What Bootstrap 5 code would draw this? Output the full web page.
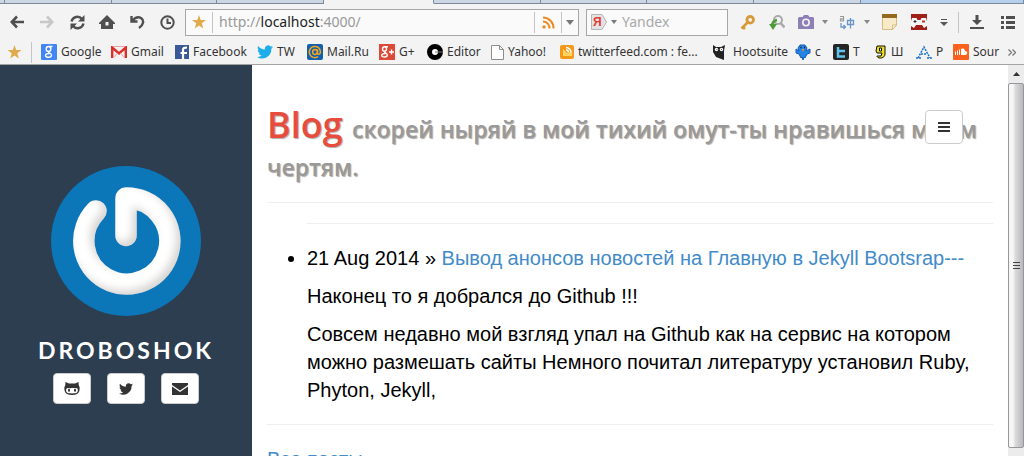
<!DOCTYPE html>
<html lang="ru">
<head>
<meta charset="utf-8">
<meta name="viewport" content="width=device-width, initial-scale=1">
<title>Blog</title>
<link rel="stylesheet" href="https://cdn.jsdelivr.net/npm/bootstrap@5.3.0/dist/css/bootstrap.min.css">
<style>
  body { font-family: "Liberation Sans", Arial, sans-serif; font-size: 20px; line-height: 28px; color: #000; background: #fff; }
  svg { display: block; flex: none; }

  /* browser chrome */
  .chrome { background: #f3f3f3; border-bottom: 1px solid #a3a3a3; font-family: "Noto Sans", sans-serif; font-size: 12px; line-height: 16px; color: #333; }
  .chrome a { color: #333; }
  .tabstrip { height: 4px; }
  .tab { background: #cbd7e4; border-bottom: 1px solid #80899a; border-right: 1px solid #80899a; }
  .tab-active { background: #f3f3f3; border-bottom-color: #f3f3f3; }
  .tab-rest { background: #b4d0ec; }
  .toolbar { height: 36px; padding-left: 2px; color: #4f4f4f; }
  .tool { width: 30px; height: 26px; border: 0; padding: 0; background: none; color: inherit; display: flex; align-items: center; justify-content: center; flex: none; }
  .tool-off { color: #c8c8c8; }
  .field { height: 27px; border: 1px solid #a6a6a6; background: #fafafa; }
  .url-box { margin-left: 3px; }
  .url-star { margin: 0 6px; }
  .field input { border: 0; background: none; outline: 0; padding: 0; width: 100%; min-width: 0; font-size: 14px; color: #8a8a8a; }
  .field input::placeholder { color: #a9a9a9; opacity: 1; }
  .address { font-size: 14px; position: relative; margin-left: 6px; }
  .address-text { position: absolute; left: 0; pointer-events: none; white-space: nowrap; color: #999; }
  .address-text b { font-weight: 400; color: #222; }
  .address input { color: transparent; }
  .vline { width: 1px; height: 21px; background: #c4c4c4; flex: none; }
  .search-box { width: 142px; margin-left: 7px; margin-right: 4px; }
  .search-box input { margin-left: 5px; }
  .bookmarks { height: 24px; padding: 0 8px 0 7px; }
  .bookmarks a { display: flex; align-items: center; gap: 4px; text-decoration: none; white-space: nowrap; flex: none; }

  /* page */
  .page-row { height: calc(100vh - 65px); }
  .side { background: #2c3e50; width: 25%; padding-top: 101px; }
  .site-name { font-family: Lato, sans-serif; font-size: 23px; line-height: 28px; font-weight: 700; letter-spacing: 3px; color: #fff; margin: 20px 0 9px; }
  .social { width: 38px; height: 31px; padding: 0; border: 1px solid #ccc; border-radius: 4px; background: #fff; color: #333; display: flex; align-items: center; justify-content: center; }
  .main-col { padding: 41px 15px 0; overflow: hidden; min-width: 0; position: relative; }
  .blog-title { font-family: "Open Sans", "Noto Sans", sans-serif; font-size: 36px; line-height: 38px; font-weight: 600; color: #e74c3c; text-shadow: 1px 1px 1px #aaa; margin: 0; }
  .blog-title small { font-size: 23px; line-height: 22px; font-weight: 600; color: #999; }
  .rule { border: 0; border-top: 1px solid #eee; opacity: 1; margin: 20px 0; }
  .posts { padding-left: 40px; margin: 0; }
  .posts p { margin: 10px 0 0; }
  .link { color: #428bca; text-decoration: none; }
  .menu-btn { position: absolute; right: 45px; top: 45px; width: 38px; height: 34px; padding: 0; border: 1px solid #ccc; border-radius: 4px; background: #fff; display: flex; align-items: center; justify-content: center; }
  .scroll-track { width: 16px; background: #ececec; flex: none; }
  .scroll-up { height: 18px; }
  .scroll-thumb { border: 1px solid #97979b; border-radius: 2px; background: linear-gradient(90deg, #f6f6f6 0 30%, #dadadc 45%, #b9b9bd); margin-bottom: 8px; }
</style>
</head>
<body class="vh-100 overflow-hidden">
<header class="chrome">
  <div class="tabstrip d-flex">
    <div class="tab" style="width:.5%"></div><div class="tab" style="width:10.4%"></div><div class="tab" style="width:10.3%"></div><div class="tab" style="width:10.4%"></div>
    <div class="tab tab-active" style="width:10.8%"></div>
    <div class="tab" style="width:10.4%"></div><div class="tab" style="width:10.4%"></div><div class="tab" style="width:10.4%"></div><div class="tab" style="width:10.5%"></div>
    <div class="tab tab-rest flex-grow-1"></div>
  </div>
  <div class="toolbar d-flex align-items-center">
    <button class="tool" aria-label="Back"><svg width="14" height="14" viewBox="0 0 14 14" fill="none" stroke="currentColor" stroke-width="2.6"><path d="M7 1.5 1.8 7 7 12.500M2 7h12"/></svg></button>
    <button class="tool tool-off" aria-label="Forward"><svg width="14" height="14" viewBox="0 0 14 14" fill="none" stroke="currentColor" stroke-width="2.600"><path d="M7 1.500 12.200 7 7 12.500M12 7H0"/></svg></button>
    <button class="tool" aria-label="Reload"><svg width="15" height="15" viewBox="0 0 15 15" fill="none" stroke="currentColor" stroke-width="2.400"><path d="M1.500 6.500a6 6 0 0 1 10.500-2.500M13.500 8.500A6 6 0 0 1 3 11"/><path d="M14.500 0v6.500H8zM.5 15V8.500H7z" fill="currentColor" stroke="none"/></svg></button>
    <button class="tool" aria-label="Home"><svg width="16" height="14" viewBox="0 0 16 14" fill="currentColor"><path fill-rule="evenodd" d="M8 0 0 8v1h2v5h12V9h2V8zM6.500 7h3v3.500h-3z"/></svg></button>
    <button class="tool" aria-label="Undo"><svg width="15" height="14" viewBox="0 0 15 14" fill="none" stroke="currentColor" stroke-width="2.400"><path d="M1.500 1v5.500H7.500M2 6.200C5 2.500 8 1.500 11 3c3.500 2.500 2.500 7-2 10"/></svg></button>
    <button class="tool" aria-label="History"><svg width="15" height="15" viewBox="0 0 15 15" fill="none" stroke="currentColor" stroke-width="2"><circle cx="7.500" cy="7.500" r="6.200"/><path d="M7.500 3.500v4.500h3.500"/></svg></button>
    <div class="field url-box d-flex align-items-center flex-grow-1">
      <svg class="url-star" width="14" height="14" viewBox="0 0 14 14" fill="#e0ab4c"><path d="m7 0 1.700 5H14L9.800 8.200l1.500 5.300L7 10.400l-4.300 3.100 1.500-5.300L0 5h5.300z"/></svg>
      <span class="vline"></span>
      <label class="address d-flex align-items-center flex-grow-1"><span class="address-text">http://<b>localhost</b>:4000/</span><input type="text" aria-label="Address"></label>
      <span class="vline"></span>
      <button class="tool" style="width:26px" aria-label="Feed"><svg width="13" height="13" viewBox="0 0 13 13" fill="none" stroke="#ee8a22" stroke-width="2"><path d="M1 1.500A10.500 10.500 0 0 1 11.500 12.500M1 5.500a6.500 6.500 0 0 1 6.500 7"/><circle cx="2" cy="11" r="1.700" fill="#ee8a22" stroke="none"/></svg></button>
      <span class="vline"></span>
      <button class="tool" style="width:16px" aria-label="Address list"><svg width="8" height="5" viewBox="0 0 8 5" fill="#777"><path d="M0 0h8L4 5z"/></svg></button>
    </div>
    <div class="field search-box d-flex align-items-center ps-1">
      <svg width="16" height="16" viewBox="0 0 16 16"><path d="M.5.500H11L15.500 8 11 15.500H.5z" fill="#e3e3e3" stroke="#b5b5b5"/><text x="2" y="12" font-size="12" font-weight="700" fill="#e23b34" font-family="Liberation Sans">Я</text></svg>
      <svg class="ms-1" width="6" height="4" viewBox="0 0 6 4" fill="#777"><path d="M0 0h6L3 4z"/></svg>
      <input type="text" placeholder="Yandex" aria-label="Search">
    </div>
    <button class="tool" aria-label="Passwords"><svg width="15" height="15" viewBox="0 0 15 15"><path d="M8.500 6.500 1.500 13.500M2.500 11.500l2.500 2.500" stroke="#d69a38" stroke-width="2.600"/><circle cx="10.200" cy="4.800" r="3.300" fill="none" stroke="#d69a38" stroke-width="2.800"/></svg></button>
    <button class="tool" aria-label="Find"><svg width="16" height="15" viewBox="0 0 16 15" fill="none"><circle cx="9" cy="5" r="4" stroke="#aaa" stroke-width="2"/><path d="m11.500 8 4 4.500" stroke="#aaa" stroke-width="2.600"/><path d="M8 5C4 6 3 8 3.500 11" stroke="#4d9c38" stroke-width="2.600"/><path d="M0 9h8l-4 6z" fill="#4d9c38"/></svg></button>
    <button class="tool" style="width:28px" aria-label="Screenshot"><svg width="16" height="14" viewBox="0 0 16 14" fill="#8d80b5"><path d="M1 2h3.500L6 0h4l1.500 2H15l1 1v11H0V3z"/><circle cx="8" cy="7.500" r="3.200" stroke="#f4f4f4" stroke-width="1.600" fill="#8d80b5"/></svg></button>
    <button class="tool" style="width:10px" aria-label="Screenshot options"><svg width="6" height="4" viewBox="0 0 6 4" fill="#888"><path d="M0 0h6L3 4z"/></svg></button>
    <button class="tool" style="width:34px" aria-label="Translate"><svg width="16" height="15" viewBox="0 0 16 15" fill="none"><path d="M1 1.500h3.500V6H1.500V3.800h3" stroke="#999" stroke-width="1.200"/><path d="M2 8v4h4M4.500 10l2 2-2 2M8.500 5.500h6v4h-6zM11.500 3v10.500" stroke="#6796cb" stroke-width="1.300"/></svg></button>
    <button class="tool" style="width:6px" aria-label="Translate options"><svg width="6" height="4" viewBox="0 0 6 4" fill="#888"><path d="M0 0h6L3 4z"/></svg></button>
    <button class="tool" style="width:38px" aria-label="Notes"><svg width="15" height="16" viewBox="0 0 15 16"><path d="M.5 3h14v8l-4 4.500H.5z" fill="#f8e9c8" stroke="#d5bb85"/><path d="M10.500 15.500V11h4z" fill="#fff6df" stroke="#d5bb85"/><path d="M0 0h15v4H0z" fill="#95691d"/></svg></button>
    <button class="tool" style="width:22px" aria-label="Games"><svg width="16" height="16" viewBox="0 0 16 16"><path d="M0 0h16v16H0z" fill="#9e2019"/><path d="M1 4h4.500l1 2h3l1-2H15l1 3v5l-3 2-2-3H5l-2 3-3-2V7z" fill="#f6f6f6"/><path d="M2.500 7.500h3M4 6v3" stroke="#333"/><path d="M11 7.500h3" stroke="#c33" stroke-width="2"/></svg></button>
    <button class="tool" style="width:28px" aria-label="More tools"><svg width="8" height="7" viewBox="0 0 8 7" fill="#555"><path d="M1 0h6v1H1zM0 3h8L4 7z"/></svg></button>
    <span class="vline"></span>
    <button class="tool" style="width:36px" aria-label="Downloads"><svg width="14" height="14" viewBox="0 0 14 14" fill="currentColor"><path d="M5.500 0h3v5H12L7 10 2 5h3.500zM0 12h14v2H0z"/></svg></button>
    <button class="tool me-1" style="width:25px" aria-label="Menu"><svg width="14" height="13" viewBox="0 0 14 13" fill="currentColor"><path d="M0 0h3v3H0zM5 0h9v3H5zM0 5h3v3H0zM5 5h9v3H5zM0 10h3v3H0zM5 10h9v3H5z"/></svg></button>
  </div>
  <nav class="bookmarks d-flex align-items-center" aria-label="Bookmarks">
    <svg width="15" height="14" viewBox="0 0 14 14" fill="#e0ab4c"><path d="m7 0 1.700 5H14L9.800 8.200l1.500 5.300L7 10.400l-4.300 3.100 1.500-5.300L0 5h5.300z"/></svg>
    <span class="vline" style="margin:0 9px"></span>
    <a href="#" style="width:70px"><svg width="16" height="16" viewBox="0 0 16 16"><rect width="16" height="16" rx="1" fill="#4285f4"/><g fill="none" stroke="#fff" stroke-width="1.400"><ellipse cx="7.500" cy="5" rx="2.300" ry="2.500"/><path d="M8 2.500h3.500M8 7.500c-2 1.200 2.500 1.500 2.500 3.500 0 3-6 3-6 .5 0-1.500 2-2 4-2"/></g></svg>Google</a>
    <a href="#" style="width:64px"><svg width="16" height="12" viewBox="0 0 16 12"><path d="M0 0h16v12H0z" fill="#f7f0ef"/><path d="M1.200 12V1.500L8 7.500l6.800-6V12" fill="none" stroke="#db2f2b" stroke-width="2.400"/><path d="M3 11.500 6.500 7M13 11.500 9.500 7M2 .5h12" stroke="#e6a7a4"/></svg>Gmail</a>
    <a href="#" style="width:82px"><svg width="14" height="14" viewBox="0 0 14 14"><path d="M0 0h14v14H0z" fill="#3b5998"/><path d="M8 14V5c0-2 1-2.500 4-2.500M5.500 8h6.500" stroke="#fff" stroke-width="2.200" fill="none"/></svg>Facebook</a>
    <a href="#" style="width:50px"><svg width="16" height="14" viewBox="0 0 24 20" fill="#1daeea"><path d="M24 2.400c-.9.400-1.800.7-2.800.8 1-.6 1.800-1.600 2.200-2.700-1 .6-2 1-3.100 1.200A4.900 4.900 0 0 0 11.900 6.200C7.800 6 4.200 4.100 1.700 1 .4 3.200 1 6.100 3.200 7.600c-.8 0-1.600-.2-2.200-.6 0 2.300 1.600 4.400 3.900 4.900-.7.200-1.500.2-2.200.1.600 2 2.400 3.400 4.600 3.400A10 10 0 0 1 0 17.500 14 14 0 0 0 21.500 5c1-.700 1.800-1.600 2.500-2.600z"/></svg>TW</a>
    <a href="#" style="width:72px"><svg width="16" height="16" viewBox="0 0 16 16"><rect width="16" height="16" rx="2" fill="#1160ae"/><g fill="none" stroke="#f5a51d" stroke-width="1.500"><circle cx="8" cy="8" r="2.400"/><path d="M10.500 5.500V9c0 2 3 1.500 3-1A5.600 5.600 0 1 0 11 12.700"/></g></svg>Mail.Ru</a>
    <a href="#" style="width:48px"><svg width="16" height="16" viewBox="0 0 16 16"><path d="M0 0h16v16H0z" fill="#dc4937"/><g fill="none" stroke="#fff" stroke-width="1.400"><ellipse cx="5.500" cy="5" rx="2" ry="2.300"/><path d="M6 2.700h3M6 7.500c-2 1 2.300 1.500 2.300 3.500 0 2.600-5.600 2.600-5.600.5 0-1.500 2-2 3.600-2M12.500 5.500v5M10 8h5"/></g></svg>G+</a>
    <a href="#" style="width:64px"><svg width="16" height="16" viewBox="0 0 16 16"><circle cx="8" cy="8" r="5.500" fill="#fff" stroke="#000" stroke-width="5"/><path d="M8 8h8" stroke="#777"/></svg>Editor</a>
    <a href="#" style="width:69px"><svg width="13" height="15" viewBox="0 0 13 15"><path d="M.5.500h8l4 4v10H.5zM8.500.500v4h4" fill="#fff" stroke="#8f8f8f"/></svg>Yahoo!</a>
    <a href="#" style="width:153px"><svg width="14" height="14" viewBox="0 0 14 14"><rect width="14" height="14" rx="2" fill="#f39a1c"/><path d="M3 4v7h9V7L7 8z" fill="#ffd562"/><path d="M6 2.500a5 5 0 0 1 5 5M6 5a2.500 2.500 0 0 1 2.500 2.500" stroke="#fff" stroke-width="1.500" fill="none"/></svg>twitterfeed.com : fe...</a>
    <a href="#" style="width:82px"><svg class="me-1" width="12" height="15" viewBox="0 0 12 15"><path d="M0 0 3 2h5l4-2-1 6v9L3 12 0 7z" fill="#222"/><circle cx="3.500" cy="4.500" r="1.700" fill="#fff"/><circle cx="8.500" cy="4.500" r="1.700" fill="#fff"/><path d="M3.500 4.500h.8M8 4.500h.8" stroke="#222"/></svg>Hootsuite</a>
    <a href="#" style="width:38px"><svg width="16" height="16" viewBox="0 0 16 16"><path d="M5 1h5l2 3-1 3 4-2v4l-3 1-2 4-1-1-1 3-1-3-1 1-2-4-3-1V5l3 2-1-3z" fill="#2585e6" stroke="#145cae"/><path d="M5.500 3.500h1M9 3.500h1" stroke="#111" stroke-width="1.500"/><path d="M7 5h2l-1 3z" fill="#f39618"/></svg>с</a>
    <a href="#" style="width:41px"><svg width="16" height="16" viewBox="0 0 16 16"><rect width="16" height="16" rx="2" fill="#252525"/><path d="M5 3v9.500h7M5 7h7" stroke="#5ec5ec" stroke-width="2.500" fill="none"/></svg>T</a>
    <a href="#" style="width:42px"><svg width="13" height="16" viewBox="0 0 13 16"><path d="M3 2h8v8c0 5-8 5-8 2h4l1-3H3L2 7z" fill="#e9df23" stroke="#111"/><path d="M5.500 4v3h2V4z" fill="#fff" stroke="#111"/></svg>Ш</a>
    <a href="#" style="width:37px"><svg width="16" height="14" viewBox="0 0 16 14"><path d="M2 13 8 2l6 11M5 9h6M0 13h5M11 13h5" stroke="#1b6fce" stroke-width="1.500" fill="none" stroke-dasharray="2 1"/></svg>P</a>
    <a href="#" style="width:47px"><svg width="16" height="16" viewBox="0 0 16 16"><rect width="16" height="16" rx="1" fill="#f9611d"/><path d="M2 11V8l1-1v4zM4 11V7l1-1v5zM6 11V6l1-1v6zM8 11V5c3-1.500 4 1 4 2 3-.5 3 4 0 4z" fill="#fff"/></svg>Sour</a>
    <a href="#" class="ms-auto" aria-label="More bookmarks"><svg width="8" height="7" viewBox="0 0 8 7" fill="none" stroke="#777" stroke-width="1.300"><path d="m.5.500 3 3-3 3M4.500.500l3 3-3 3"/></svg></a>
  </nav>
</header>

<div class="page-row d-flex">
  <div class="d-flex flex-grow-1" style="min-width:0">
    <aside class="side d-flex flex-column align-items-center flex-shrink-0">
      <svg width="150" height="150" viewBox="0 0 150 150" role="img" aria-label="Avatar">
        <defs>
          <filter id="bevel" x="-30%" y="-30%" width="160%" height="160%" color-interpolation-filters="sRGB">
            <feGaussianBlur in="SourceAlpha" stdDeviation="4" result="b"/>
            <feOffset in="b" dx="-4" dy="-4" result="o"/>
            <feComposite in="SourceAlpha" in2="o" operator="out" result="edge"/>
            <feFlood flood-color="#8a8078" flood-opacity=".35"/>
            <feComposite in2="edge" operator="in" result="shade"/>
            <feMerge><feMergeNode in="SourceGraphic"/><feMergeNode in="shade"/></feMerge>
          </filter>
        </defs>
        <circle cx="75" cy="75" r="75" fill="#0b76b8"/>
        <path filter="url(#bevel)" d="M45 45A43 43 0 1 0 75 32V69.500" fill="none" stroke="#fff" stroke-width="21.500" stroke-linecap="round" stroke-linejoin="round"/>
      </svg>
      <h1 class="site-name">DROBOSHOK</h1>
      <div class="d-flex gap-3">
        <a class="social" href="#" aria-label="GitHub"><svg width="16" height="13" viewBox="0 0 16 13"><path fill="currentColor" fill-rule="evenodd" d="M1.500 0 5 1.500h6L14.500 0l.3 3.500C16 5 15.800 7 15.300 9c-.8 2.800-3 4-7.300 4S1.500 11.800.7 9C.2 7 0 5 1.200 3.500zM4 6C1.500 6 1.800 9.500 3 10.500c1.500 1.200 8.500 1.200 10 0 1.200-1 1.500-4.500-1-4.500-2 0-6 .3-8 0z"/><ellipse cx="5" cy="8.200" rx="1" ry="1.600" fill="currentColor"/><ellipse cx="11" cy="8.200" rx="1" ry="1.600" fill="currentColor"/></svg></a>
        <a class="social" href="#" aria-label="Twitter"><svg width="14" height="12" viewBox="0 0 24 20" fill="currentColor"><path d="M24 2.400c-.9.400-1.800.7-2.800.8 1-.6 1.800-1.600 2.200-2.700-1 .6-2 1-3.100 1.200A4.900 4.900 0 0 0 11.900 6.200C7.800 6 4.200 4.100 1.700 1 .4 3.200 1 6.100 3.200 7.600c-.8 0-1.600-.2-2.200-.6 0 2.300 1.600 4.400 3.900 4.900-.7.200-1.500.2-2.200.1.600 2 2.400 3.400 4.600 3.400A10 10 0 0 1 0 17.500 14 14 0 0 0 21.500 5c1-.700 1.800-1.600 2.500-2.600z"/></svg></a>
        <a class="social" href="#" aria-label="Email"><svg width="16" height="12" viewBox="0 0 16 12" fill="currentColor"><path d="M0 0h16v2L8 7.500 0 2zM0 3.500 8 9l8-5.500V12H0z"/></svg></a>
      </div>
    </aside>
    <main class="main-col flex-grow-1">
      <h2 class="blog-title">Blog <small>скорей ныряй в мой тихий омут-ты нравишься моим чертям.</small></h2>
      <button class="menu-btn" aria-label="Menu"><svg width="12" height="10" viewBox="0 0 12 10" fill="#333"><path d="M0 0h12v2H0zM0 4h12v2H0zM0 8h12v2H0z"/></svg></button>
      <hr class="rule">
      <ul class="posts">
        <li class="list-unstyled"><hr class="rule"></li>
        <li>21 Aug 2014 » <a class="link" href="#">Вывод анонсов новостей на Главную в Jekyll Bootsrap---</a>
          <p>Наконец то я добрался до Github !!!</p>
          <p>Совсем недавно мой взгляд упал на Github как на сервис на котором можно размешать сайты Немного почитал литературу установил Ruby, Phyton, Jekyll,</p>
        </li>
      </ul>
      <hr class="rule">
      <a class="link" href="#">Все посты</a>
    </main>
  </div>
  <div class="scroll-track d-flex flex-column">
    <div class="scroll-up d-flex align-items-center justify-content-center"><svg width="7" height="4" viewBox="0 0 7 4" fill="#333"><path d="M0 4h7L3.500 0z"/></svg></div>
    <div class="scroll-thumb d-flex align-items-center justify-content-center flex-grow-1"><svg width="7" height="8" viewBox="0 0 7 8" fill="#444"><path d="M0 0h7v1H0zM0 3h7v1H0zM0 6h7v1H0z"/></svg></div>
  </div>
</div>
<script src="https://cdn.jsdelivr.net/npm/bootstrap@5.3.0/dist/js/bootstrap.bundle.min.js"></script>
</body>
</html>
